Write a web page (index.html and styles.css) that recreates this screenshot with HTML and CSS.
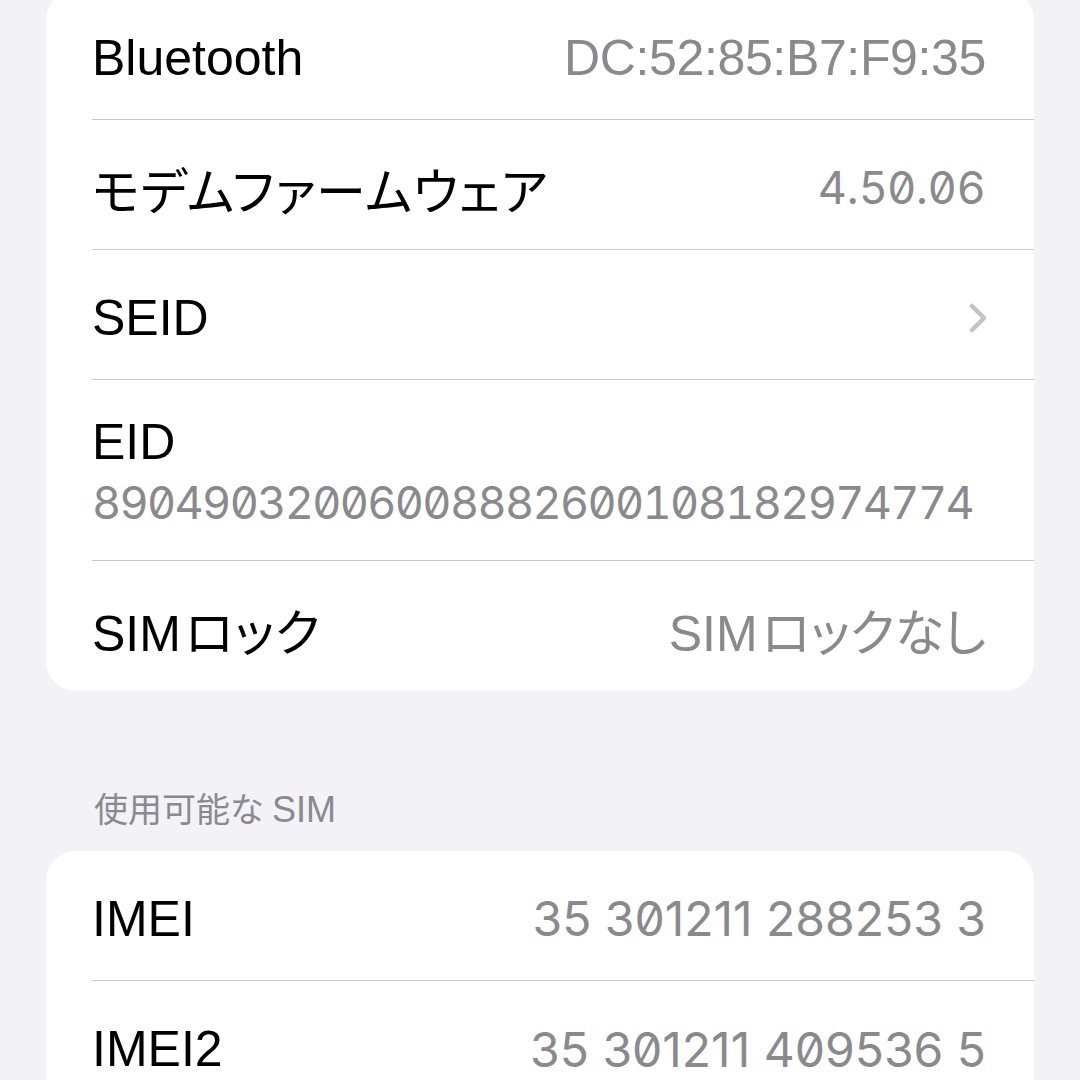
FILE: index.html
```html
<!DOCTYPE html>
<html lang="ja">
<head>
<meta charset="utf-8">
<link rel="stylesheet" href="styles.css">
</head>
<body>
<div class="page">
  <div class="card card-top">
    <div class="row">
      <span class="label">Bluetooth</span>
      <span class="value mac">DC:52:85:B7:F9:35</span>
    </div>
    <div class="row">
      <span class="label jp">モデムファームウェア</span>
      <span class="value num ver">4.50.06</span>
    </div>
    <div class="row">
      <span class="label">SEID</span>
      <svg class="chevron" viewBox="0 0 20 30" width="20" height="30"><path d="M4 3 L16 15 L4 27" fill="none" stroke="#c4c4c7" stroke-width="4.5" stroke-linecap="round" stroke-linejoin="round"/></svg>
    </div>
    <div class="row row-stack">
      <span class="label">EID</span>
      <span class="value num eid">89049032006008882600108182974774</span>
    </div>
    <div class="row">
      <span class="label">SIM<span class="jp">ロック</span></span>
      <span class="value">SIM<span class="jp jp-tight">ロックなし</span></span>
    </div>
  </div>

  <div class="section-header"><span class="jp-h">使用可能な</span>SIM</div>

  <div class="card">
    <div class="row">
      <span class="label">IMEI</span>
      <span class="value num imei">35 301211 288253 3</span>
    </div>
    <div class="row">
      <span class="label">IMEI2</span>
      <span class="value num imei">35 301211 409536 5</span>
    </div>
  </div>
</div>
</body>
</html>
```

FILE: styles.css
```css
html, body {
  margin: 0;
  padding: 0;
  background: #f2f2f7;
}

body {
  width: 1080px;
  height: 1080px;
  overflow: hidden;
  font-family: "Liberation Sans", "Noto Sans CJK JP", sans-serif;
}

.page {
  padding: 0 46px;
}

.card {
  background: #ffffff;
  border-radius: 30px;
  padding-left: 46px;
}

.card-top {
  margin-top: -10px;
}

.row {
  height: 130px;
  display: flex;
  align-items: center;
  justify-content: space-between;
  padding-right: 48px;
  padding-top: 6px;
  border-bottom: 1.5px solid #c8c8cc;
  box-sizing: border-box;
}

.row:last-child {
  border-bottom: none;
}

.label {
  font-size: 50px;
  color: #000000;
  white-space: nowrap;
}

.value {
  font-size: 50px;
  color: #8a8a8e;
  white-space: nowrap;
}

.mac {
  letter-spacing: -0.35px;
}

.jp {
  font-family: "Noto Sans CJK JP", sans-serif;
  font-feature-settings: "palt";
  letter-spacing: 1px;
  margin-left: 4px;
}

.jp-tight {
  letter-spacing: 0;
}

.label.jp {
  margin-left: 0;
}

.num {
  font-family: Inter, "Liberation Sans", sans-serif;
  font-size: 45px;
  font-variant-numeric: slashed-zero;
}

.ver {
  letter-spacing: 0.8px;
}

.row-stack {
  height: 181px;
  flex-direction: column;
  align-items: flex-start;
  justify-content: center;
  gap: 4px;
  padding-top: 2px;
}

.eid {
  font-variant-numeric: tabular-nums slashed-zero;
  letter-spacing: -1.65px;
}

.imei {
  font-size: 48px;
}

.chevron {
  display: block;
  margin-right: -2px;
}

.section-header {
  padding: 95px 0 19px 48px;
  font-size: 36px;
  line-height: 44px;
  color: #8a8a8e;
  font-family: "Liberation Sans", "Noto Sans CJK JP", sans-serif;
}

.jp-h {
  font-family: "Noto Sans CJK JP", sans-serif;
  font-size: 34px;
  margin-right: 8px;
}
```
